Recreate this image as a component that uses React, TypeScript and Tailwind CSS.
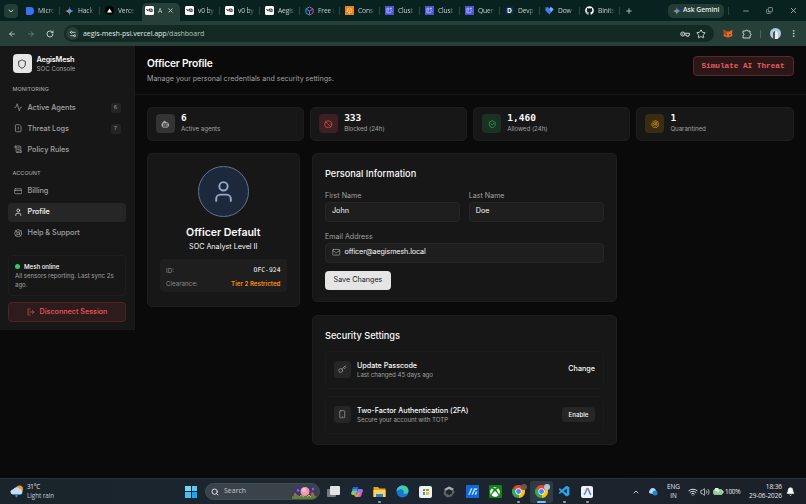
import React from "react";
import {
  Activity, ArrowLeft, ArrowRight, Ban, Bell, Bot, ChevronDown, ChevronUp, Copy, CreditCard, FileWarning, Key,
  LifeBuoy, LogOut, Mail, Minus, EllipsisVertical, Plus, Radar, RotateCw, ScrollText, Search, Settings2, Shield,
  ShieldCheck, Smartphone, Star, User, Volume2, Wifi, X,
} from "lucide-react";
import { FaGithub, FaXbox } from "react-icons/fa";
import { VscVscode } from "react-icons/vsc";

const Gemini = ({ className }: { className: string }) => (
  <svg viewBox="0 0 24 24" className={className}>
    <path d="M12 0C13 8 16 11 24 12L12 12Z" fill="#4b8df8" />
    <path d="M24 12C16 13 13 16 12 24L12 12Z" fill="#45b36b" />
    <path d="M12 24C11 16 8 13 0 12L12 12Z" fill="#f2c04b" />
    <path d="M0 12C8 11 11 8 12 0L12 12Z" fill="#ee6a5f" />
    <circle cx="12" cy="12" r="4.5" fill="#5a8ff0" />
  </svg>
);

const V0 = () => (
  <span className="flex h-[9px] w-[9px] items-center justify-center rounded-[1.5px] bg-white">
    <svg viewBox="0 0 20 12" className="w-[7px]" fill="none" stroke="#111" strokeWidth="2.2">
      <path d="M1 3L6 9V3M9 3h6a3 3 0 0 1 3 3v4h-5a3 3 0 0 1-3-3V3M11 10L18 3" />
    </svg>
  </span>
);

const Cluster = () => (
  <span className="flex h-[9px] w-[9px] items-center justify-center bg-[#4d55d8]">
    <svg viewBox="0 0 16 16" className="h-[7px] w-[7px]" fill="none" stroke="#d5d8ff" strokeWidth="1.5">
      <path d="M7 3H2v10h9v-3M4 6h4M4 9h3M11 1v5M8.500 3.500h5M11 7l3 3" />
    </svg>
  </span>
);

const tabs: { icon: React.ReactNode; label: string; active?: boolean; sep?: boolean }[] = [
  { icon: <span className="h-2 w-2 rounded-[1px] rounded-r-[4px] bg-[#3973f4]" />, label: "Micro", sep: true },
  { icon: <Gemini className="h-2.5 w-2.5" />, label: "Hack", sep: true },
  {
    icon: (
      <span className="flex h-[9px] w-[9px] items-center justify-center rounded-full bg-black">
        <svg viewBox="0 0 10 10" className="h-[5px] w-[5px]"><path d="M5 1L10 9H0Z" fill="#fff" /></svg>
      </span>
    ),
    label: "Verce",
  },
  { icon: <V0 />, label: "A", active: true },
  { icon: <V0 />, label: "v0 by", sep: true },
  { icon: <V0 />, label: "v0 by", sep: true },
  { icon: <V0 />, label: "Aegis", sep: true },
  {
    icon: (
      <svg viewBox="0 0 20 20" className="h-[10px] w-[10px]" fill="none" strokeWidth="2">
        <path d="M10 1L2 5.500v9L10 19" stroke="#2da9e8" />
        <path d="M10 1l8 4.500v9L10 19" stroke="#e0559a" />
        <path d="M3 6l7 4 7-4M10 10v8" stroke="#8b7cf0" />
      </svg>
    ),
    label: "Free (",
    sep: true,
  },
  {
    icon: (
      <span className="flex h-[9px] w-[9px] items-center justify-center bg-[#ed8116]">
        <svg viewBox="0 0 16 16" className="h-[7px] w-[7px]" fill="none" stroke="#ffe2bd" strokeWidth="1.4">
          <path d="M8 2l5 3v6l-5 3-5-3V5zM3 5l5 3 5-3M8 8v6" />
        </svg>
      </span>
    ),
    label: "Cons",
    sep: true,
  },
  { icon: <Cluster />, label: "Clust", sep: true },
  { icon: <Cluster />, label: "Clust", sep: true },
  { icon: <Cluster />, label: "Query", sep: true },
  {
    icon: <span className="flex h-[9px] w-[9px] items-center justify-center rounded-full bg-[#0a3049] text-[6.500px] font-bold text-white">D</span>,
    label: "Devp",
    sep: true,
  },
  {
    icon: (
      <svg viewBox="0 0 20 20" className="h-[9px] w-[9px]">
        <path d="M1 3h6l3 3 3-4 6 5-9 12L1 10Z" fill="#3f7df5" />
        <path d="M10 6l3-4 6 5-5 6Z" fill="#80b0ff" />
      </svg>
    ),
    label: "Dow",
    sep: true,
  },
  { icon: <FaGithub className="h-[9px] w-[9px] text-white" />, label: "Binits", sep: true },
];

function BrowserChrome() {
  return (
    <header className="font-['Open_Sans','Noto_Sans',sans-serif] text-[#c8d3cf]">
      <div className="flex h-[21px] items-center bg-[#08231f]">
        <div className="flex w-5 pl-1">
          <span className="flex h-[14px] w-[14px] items-center justify-center rounded-[4px] bg-[#233e37]">
            <ChevronDown className="h-2 w-2" strokeWidth={3} />
          </span>
        </div>
        {tabs.map((t, i) => (
          <div key={i} className="relative flex h-[21px] w-10 items-center pl-[5px]">
            {t.active && <span className="absolute top-[3px] right-0 bottom-0 left-[2px] rounded-t-[5px] bg-[#263f39]" />}
            <span className="relative flex w-[9px] shrink-0 justify-center">{t.icon}</span>
            <span className="relative ml-[4px] w-[21px] shrink-0 whitespace-nowrap text-[6.700px] leading-[10px] tracking-[-0.15px] [mask-image:linear-gradient(to_right,#000_50%,transparent_80%)]">{t.label}</span>
            {t.active && <X className="absolute top-[7px] left-[27px] h-[7px] w-[7px]" strokeWidth={3} />}
            {t.sep && <span className="absolute right-0 h-2 w-px bg-[#29453d]" />}
          </div>
        ))}
        <Plus className="ml-[5px] h-2 w-2" strokeWidth={2.5} />
        <div className="ml-[35px] flex h-[14px] w-[56px] items-center gap-[2px] rounded-[5px] bg-[#233c36] pl-[5px]">
          <Gemini className="h-2 w-2" />
          <span className="whitespace-nowrap text-[6.800px] font-semibold tracking-[-0.05px] text-[#e2ebe7]">Ask Gemini</span>
        </div>
        <span className="ml-[4px] h-2 w-px bg-[#29453d]" />
        <Minus className="ml-[13px] h-[8px] w-[8px]" />
        <Copy className="ml-[16px] h-[7px] w-[7px] -scale-x-100 rotate-180" />
        <X className="ml-[16px] h-[9px] w-[9px]" />
      </div>
      <div className="flex h-[25px] items-center bg-[#263f39]">
        <div className="flex w-[64px] shrink-0 items-center gap-[11px] pl-[8px]">
          <ArrowLeft className="h-2 w-2" strokeWidth={2.5} />
          <ArrowRight className="h-2 w-2 text-[#71847e]" strokeWidth={2.5} />
          <RotateCw className="h-2 w-2" strokeWidth={2.8} />
        </div>
        <div className="flex h-[17px] w-[650px] shrink-0 items-center rounded-full bg-[#132924] pr-[8px] pl-[2px]">
          <span className="flex h-[13px] w-[13px] shrink-0 items-center justify-center rounded-full bg-[#263f39]">
            <Settings2 className="h-2 w-2 rotate-180" strokeWidth={2.5} />
          </span>
          <span className="ml-[4px] flex-1 text-[7.080px] tracking-[-0.06px] whitespace-nowrap text-[#e2ebe7]">
            aegis-mesh-psi.vercel.app<span className="text-[#b3c1bb]">/dashboard</span>
          </span>
          <svg viewBox="0 0 20 12" className="h-[6px] w-[10px]" fill="none" stroke="currentColor" strokeWidth="2">
            <circle cx="5.500" cy="6" r="4" /><circle cx="5.500" cy="6" r="0.700" />
            <path d="M9.500 4.500H19V8H17.500V10.500H13.500V8H9.500" />
          </svg>
          <Star className="ml-[6px] h-[10px] w-[10px]" strokeWidth={2.3} />
        </div>
        <svg viewBox="0 0 20 18" className="ml-[9px] h-[9px] w-[10px] shrink-0">
          <path d="M1 1l6 4h6l6-4-1 8 1 5-5 2-4 1-4-1-5-2 1-5Z" fill="#e5672a" />
          <path d="M4 10l4 1v3ZM16 10l-4 1v3Z" fill="#3a2822" />
          <path d="M1 1l6 4 1 6-7-2Z" fill="#b9421b" />
        </svg>
        <svg viewBox="0 0 20 20" className="ml-[9px] h-[10px] w-[10px] shrink-0" fill="none" stroke="currentColor" strokeWidth="2">
          <path d="M2 4h5.500a2 2 0 0 1 4 0H16v5a2 2 0 0 1 0 4v5H2v-5a2 2 0 0 0 0-4Z" strokeLinejoin="round" />
        </svg>
        <span className="ml-[8px] h-2 w-px shrink-0 bg-[#49665d]" />
        <span className="ml-[9px] flex h-[11px] w-[11px] shrink-0 items-end justify-center overflow-hidden rounded-full bg-[#a9cce2]">
          <span className="h-[8px] w-[5px] rounded-t-full border-l-2 border-[#43535c] bg-[#f1ede8]" />
        </span>
        <EllipsisVertical className="ml-[8px] h-[9px] w-[9px] shrink-0" strokeWidth={2.5} />
      </div>
    </header>
  );
}

function NavItem({ icon: Icon, label, count, active }: { icon: React.ElementType; label: string; count?: string; active?: boolean }) {
  return (
    <div className={"flex h-[19px] items-center rounded-[4px] px-[5.500px] " + (active ? "bg-[#262626] text-[#fafafa]" : "text-[#a1a1a1]")}>
      <Icon className="h-[8.500px] w-[8.500px]" strokeWidth={2} />
      <span className="ml-[5.500px] flex-1 pt-px text-[7.300px] font-medium tracking-[-0.03px]">{label}</span>
      {count && (
        <span className="flex h-[10px] w-[10px] items-center justify-center rounded-[2px] bg-[#242424] font-['DejaVu_Sans_Mono',monospace] text-[5.500px]">{count}</span>
      )}
    </div>
  );
}

function Sidebar() {
  return (
    <aside className="h-[284px] w-[135px] shrink-0 border-r border-[#1b1b1b] bg-[#171717] pr-[8px] pl-[8px]">
      <div className="flex h-[35px] items-center pl-[4.500px]">
        <span className="flex h-[19px] w-[19px] items-center justify-center rounded-[4px] bg-[#e5e5e5] text-[#171717]">
          <Shield className="h-[10px] w-[10px]" />
        </span>
        <div className="ml-[5px] pt-px">
          <div className="text-[7.300px] leading-[9px] font-semibold tracking-[-0.18px] text-[#fafafa]">AegisMesh</div>
          <div className="text-[6.200px] leading-[9px] tracking-[-0.02px] text-[#a1a1a1]">SOC Console</div>
        </div>
      </div>
      <div className="mt-[4px] pl-[4.500px] text-[5.400px] leading-[8px] font-medium tracking-[0.12px] text-[#a1a1a1]">MONITORING</div>
      <nav className="mt-[5px] flex flex-col gap-[2px]">
        <NavItem icon={Activity} label="Active Agents" count="6" />
        <NavItem icon={FileWarning} label="Threat Logs" count="7" />
        <NavItem icon={ScrollText} label="Policy Rules" />
      </nav>
      <div className="mt-[10px] pl-[4.500px] text-[5.400px] leading-[8px] font-medium tracking-[0.12px] text-[#a1a1a1]">ACCOUNT</div>
      <nav className="mt-[4.500px] flex flex-col gap-[2px]">
        <NavItem icon={CreditCard} label="Billing" />
        <NavItem icon={User} label="Profile" active />
        <NavItem icon={LifeBuoy} label="Help & Support" />
      </nav>
      <div className="mt-[12.500px] h-[41px] rounded-[4px] border border-[#1e1e1e] px-[6px] pt-[6px]">
        <div className="flex items-center text-[6.200px] leading-[9px] font-medium tracking-[-0.06px] text-[#fafafa]">
          <span className="mr-[4px] h-[5px] w-[5px] rounded-full bg-[#32c967]" />
          Mesh online
        </div>
        <div className="mt-[1px] text-[6.100px] leading-[8.500px] tracking-[-0.02px] whitespace-nowrap text-[#a1a1a1]">All sensors reporting. Last sync 2s<br />ago.</div>
      </div>
      <button className="mt-[6px] flex h-[20px] w-full items-center justify-center gap-[5px] rounded-[4px] border border-[#4b2425] bg-[#2e1c1d] text-[7.200px] font-medium text-[#ef5558]">
        <LogOut className="h-[8px] w-[8px]" />
        Disconnect Session
      </button>
    </aside>
  );
}

const stats = [
  { icon: Bot, value: "6", label: "Active agents", tone: "bg-[#343434] text-[#e5e5e5]" },
  { icon: Ban, value: "333", label: "Blocked (24h)", tone: "bg-[#3c2022] text-[#e65358]" },
  { icon: ShieldCheck, value: "1,460", label: "Allowed (24h)", tone: "bg-[#1b3223] text-[#2fb961]" },
  { icon: Radar, value: "1", label: "Quarantined", tone: "bg-[#392c13] text-[#d39a0b]" },
];

function Field({ label, value, icon }: { label: string; value: string; icon?: boolean }) {
  return (
    <div className="flex-1">
      <div className="text-[7.100px] leading-[10px] text-[#a1a1a1]">{label}</div>
      <div className="mt-px flex h-[20px] items-center rounded-[4px] border border-[#262626] bg-[#1e1e1e] pl-[6px] text-[7.200px] text-[#fafafa]">
        {icon && <Mail className="mr-[4px] h-[8.500px] w-[8.500px] text-[#a1a1a1]" strokeWidth={2} />}
        <span className={icon ? "tracking-[-0.12px]" : ""}>{value}</span>
      </div>
    </div>
  );
}

function SecurityRow({ icon: Icon, title, note, action }: { icon: React.ElementType; title: string; note: string; action: React.ReactNode }) {
  return (
    <div className="flex h-[38px] items-center rounded-[5px] border border-[#1b1b1b] px-2">
      <span className="flex h-[17px] w-[17px] items-center justify-center rounded-[4px] bg-[#262626] text-[#a1a1a1]">
        <Icon className="h-[8.500px] w-[8.500px]" />
      </span>
      <div className="ml-[6px] flex-1">
        <div className="text-[7.200px] leading-[9px] font-medium tracking-[-0.02px] text-[#fafafa]">{title}</div>
        <div className="text-[6.200px] leading-[9px] tracking-[-0.06px] text-[#a1a1a1]">{note}</div>
      </div>
      {action}
    </div>
  );
}

function Main() {
  return (
    <main className="flex-1 text-[#fafafa]">
      <div className="flex h-[49px] items-start justify-between border-b border-[#171717] pr-[12.500px] pl-[12px]">
        <div className="pt-[10px]">
          <h1 className="text-[10.200px] leading-[14px] font-semibold tracking-[-0.21px]">Officer Profile</h1>
          <p className="mt-[3px] text-[7.100px] leading-[11px] tracking-[-0.02px] text-[#a1a1a1]">Manage your personal credentials and security settings.</p>
        </div>
        <button className="mt-[10px] h-[20px] w-[101px] rounded-[4px] border border-[#5a282b] bg-[#2b1718] pt-[2px] font-['Liberation_Mono',monospace] text-[7.700px] font-bold whitespace-nowrap text-[#e75d61]">Simulate AI Threat</button>
      </div>
      <div className="mt-[12px] grid grid-cols-4 gap-[6px] pr-[12.500px] pl-[12px]">
        {stats.map(({ icon: Icon, value, label, tone }) => (
          <div key={label} className="flex h-[33.500px] items-center rounded-[5px] border border-[#1d1d1d] bg-[#171717] pl-2">
            <span className={"flex h-[19px] w-[19px] items-center justify-center rounded-[4px] " + tone}>
              <Icon className="h-[8.500px] w-[8.500px]" />
            </span>
            <div className="ml-[6px]">
              <div className="-mt-[2px] font-['DejaVu_Sans_Mono',monospace] text-[9.500px] leading-[11px] font-bold">{value}</div>
              <div className="mt-px text-[6.200px] leading-[9px] tracking-[-0.04px] text-[#a1a1a1]">{label}</div>
            </div>
          </div>
        ))}
      </div>
      <div className="mt-[12px] flex items-start gap-[12px] pl-[12px]">
        <section className="flex h-[154.500px] w-[152.500px] flex-col items-center rounded-[5px] border border-[#1e1e1e] bg-[#171717] px-[12px] pt-[12px]">
          <span className="flex h-[51px] w-[51px] shrink-0 items-center justify-center rounded-full border border-[#64748b] bg-[#1c293d] text-[#94a9c8]">
            <User className="h-[25px] w-[25px]" strokeWidth={1.9} />
          </span>
          <h2 className="mt-[9px] text-[10.600px] leading-[14px] font-semibold tracking-[-0.06px]">Officer Default</h2>
          <p className="mt-[2.500px] text-[7.200px] leading-[10px]">SOC Analyst Level II</p>
          <div className="mt-[7px] h-[33px] w-full rounded-[4px] bg-[#1e1e1e] px-[6px] pt-[6px] text-[6.200px] leading-[11px] text-[#8d8d8d]">
            <div className="flex justify-between">
              <span>ID:</span>
              <span className="font-['DejaVu_Sans_Mono',monospace] text-[6.400px] text-[#fafafa]">OFC-924</span>
            </div>
            <div className="mt-[1.500px] flex justify-between">
              <span>Clearance:</span>
              <span className="font-semibold text-[#fe8c0b]">Tier 2 Restricted</span>
            </div>
          </div>
        </section>
        <div className="flex w-[305.500px] flex-col gap-[12.500px]">
          <section className="h-[149.500px] rounded-[5px] border border-[#1e1e1e] bg-[#171717] pt-[13px] pr-[12px] pl-[12.500px]">
            <h2 className="text-[9.200px] leading-[14px] font-medium">Personal Information</h2>
            <div className="mt-[10px] flex gap-[8.500px]">
              <Field label="First Name" value="John" />
              <Field label="Last Name" value="Doe" />
            </div>
            <div className="mt-[10px]"><Field label="Email Address" value="officer@aegismesh.local" icon /></div>
            <button className="mt-[8px] h-[19px] w-[66px] rounded-[4px] bg-[#e5e5e5] pt-px text-[7.200px] whitespace-nowrap text-[#171717]">Save Changes</button>
          </section>
          <section className="h-[130.500px] rounded-[5px] border border-[#1e1e1e] bg-[#171717] pt-[13px] pr-[12px] pl-[12.500px]">
            <h2 className="text-[9.200px] leading-[14px] font-medium">Security Settings</h2>
            <div className="mt-[8px] flex flex-col gap-[7px]">
              <SecurityRow icon={Key} title="Update Passcode" note="Last changed 45 days ago" action={<span className="text-[7.200px] font-medium">Change</span>} />
              <SecurityRow icon={Smartphone} title="Two-Factor Authentication (2FA)" note="Secure your account with TOTP" action={<span className="flex h-[15px] w-[33px] items-center justify-center rounded-[4px] bg-[#262626] text-[6.200px] font-medium">Enable</span>} />
            </div>
          </section>
        </div>
      </div>
    </main>
  );
}

const Chrome = ({ badge }: { badge: string }) => (
  <span className="relative">
    <svg viewBox="0 0 24 24" className="h-[13px] w-[13px]">
      <path d="M12 12L1.600 6A12 12 0 0 1 22.400 6Z" fill="#e94335" />
      <path d="M12 12L22.400 6A12 12 0 0 1 12 24Z" fill="#fbc116" />
      <path d="M12 12L12 24A12 12 0 0 1 1.600 6Z" fill="#34a853" />
      <circle cx="12" cy="12" r="5.800" fill="#fff" />
      <circle cx="12" cy="12" r="4.500" fill="#4285f4" />
    </svg>
    <span className={"absolute -top-[1px] -right-[2px] h-[6px] w-[6px] rounded-full " + badge} />
  </span>
);

const apps: { icon: React.ReactNode; mark?: string }[] = [
  { icon: <span className="relative h-[12px] w-[13px]"><span className="absolute bottom-[1px] left-0 h-[8px] w-[9px] rounded-[1px] bg-[#777b80]" /><span className="absolute top-0 right-0 h-[9px] w-[10px] rounded-[1px] bg-[#e2e3e4]" /></span> },
  {
    icon: (
      <svg viewBox="0 0 24 24" className="h-[12px] w-[12px]">
        <path d="M7 2h7l-4 16H4c-3 0-4-2-3-5l2-7c1-3 2-4 4-4Z" fill="#29a3ec" />
        <path d="M7 2h7l-1 4H3c1-3 2-4 4-4Z" fill="#2c62d8" />
        <path d="M3 10l9 0-2 8H4c-3 0-4-2-3-5Z" fill="#8fc94f" />
        <path d="M17 22h-7l4-16h6c3 0 4 2 3 5l-2 7c-1 3-2 4-4 4Z" fill="#d858cf" />
        <path d="M14 6h6c3 0 4 2 3 5l-1 3h-10Z" fill="#9372f2" />
        <path d="M10 22c-2 0-3-2-4-5h7l1-4h4l-4 9Z" fill="#f39350" />
      </svg>
    ),
  },
  {
    icon: (
      <svg viewBox="0 0 26 24" className="h-[12px] w-[13px]">
        <path d="M1 2h9l3 3h12v17H1Z" fill="#e9a51d" /><path d="M1 8h24v14H1Z" fill="#ffd35a" /><path d="M6 16h14v6H6Z" fill="#2382d8" />
      </svg>
    ),
    mark: "w-[3px] bg-[#9a9fa6]",
  },
  {
    icon: (
      <svg viewBox="0 0 24 24" className="h-[13px] w-[13px]">
        <circle cx="12" cy="12" r="11" fill="#1478cf" />
        <path d="M1 12C2 3 9 1 13 1c7 0 11 6 10 11-1 4-5 5-9 4 2-4-1-8-6-8-4 0-6 2-7 4Z" fill="#42cba4" />
        <path d="M1 12C2 6 6 1 13 1c-4 1-6 3-5 7-4 0-6 2-7 4Z" fill="#35bff0" />
      </svg>
    ),
  },
  {
    icon: (
      <span className="flex h-[12px] w-[13px] items-center justify-center rounded-[2px] bg-[#eef1f3]">
        <span className="grid grid-cols-2 gap-[1px]"><i className="h-[2.500px] w-[2.500px] bg-[#ef5330]" /><i className="h-[2.500px] w-[2.500px] bg-[#79b51c]" /><i className="h-[2.500px] w-[2.500px] bg-[#20a0e8]" /><i className="h-[2.500px] w-[2.500px] bg-[#f9b71b]" /></span>
      </span>
    ),
  },
  {
    icon: (
      <svg viewBox="0 0 24 24" className="h-[12px] w-[12px]">
        <path d="M12 1l9 4 2 8-6 8-9 2-7-7 2-10Z" fill="#5b6268" /><path d="M12 6l6 3v6l-6 3-6-3V9Z" fill="#20262b" /><path d="M12 1l9 4-3 4-6-3-6 3-3-3Z" fill="#a8adb1" />
      </svg>
    ),
  },
  { icon: <svg viewBox="0 0 24 24" className="h-[13px] w-[13px]"><path d="M0 0h24v24H0Z" fill="#1268da" /><path d="M4 18L9 6h3L7 18ZM10 18l5-12h6l-1 3h-3l-4 9ZM16 18l2-6h3l-2 6Z" fill="#a6e2ff" /></svg> },
  { icon: <span className="flex h-[13px] w-[13px] items-center justify-center rounded-[1px] bg-[#128315]"><FaXbox className="h-[10px] w-[10px] text-white" /></span> },
  { icon: <Chrome badge="bg-[#765641]" />, mark: "w-[3px] bg-[#9a9fa6]" },
  { icon: <Chrome badge="bg-[#a9cce2]" />, mark: "w-[9px] bg-[#62c7f3]" },
  { icon: <VscVscode className="h-[13px] w-[13px] text-[#2aa4ed]" />, mark: "w-[3px] bg-[#9a9fa6]" },
  {
    icon: (
      <span className="flex h-[12px] w-[12px] items-center justify-center rounded-[2px] bg-[#f0f2f5]">
        <svg viewBox="0 0 20 20" className="h-[9px] w-[9px]" fill="none" strokeWidth="3"><path d="M2 17C7 14 7 3 10 3" stroke="#4683e7" /><path d="M10 3c3 0 3 11 8 14" stroke="#3575ec" /><path d="M7.500 6C8.500 3 11.500 3 12.500 6" stroke="#e26b48" /></svg>
      </span>
    ),
    mark: "w-[3px] bg-[#9a9fa6]",
  },
];

function Taskbar() {
  return (
    <footer className="flex h-[26px] items-center border-t border-[#2b3238] bg-linear-to-r from-[#1a242b] via-[#1c2630] to-[#1b2028] font-['Open_Sans','Noto_Sans',sans-serif] text-[#e7eaec]">
      <svg viewBox="0 0 28 26" className="ml-[10px] h-[13px] w-[14px]">
        <circle cx="19" cy="8" r="7" fill="#f4992b" />
        <path d="M6 19a5 5 0 0 1 0-10 8 8 0 0 1 14-1 6 6 0 0 1 2 11Z" fill="#c4dcf6" />
        <path d="M11 18l5 0-2 7c-3 0-4-3-3-7Z" fill="#3488ec" />
      </svg>
      <div className="ml-[3px] w-[159px] text-[6.300px] leading-[8.500px] tracking-[-0.04px]">
        <div className="tracking-[-0.25px]">31°C</div>
        <div className="text-[#c4c9cd]">Light rain</div>
      </div>
      <div className="ml-[-1px] grid h-[12px] w-[12px] grid-cols-2 gap-[1px]">
        <i className="bg-[#71d6fa]" /><i className="bg-[#57c8f8]" /><i className="bg-[#47bdf5]" /><i className="bg-[#20a5ef]" />
      </div>
      <div className="ml-[8px] flex h-[17px] w-[115px] items-center overflow-hidden rounded-full border border-[#434b53] bg-[#3a424a] pl-[5px]">
        <Search className="h-2 w-2" strokeWidth={2.8} />
        <span className="ml-[5px] flex-1 text-[7px] text-[#c5cacd]">Search</span>
        <svg viewBox="0 0 50 28" className="mr-[2px] h-[14px] w-[25px]">
          <path d="M0 28L5 7 14 2l9 7L36 2l9 6 5 20Z" fill="#303b76" />
          <path d="M0 23l8-5 8 5 8-3 9 3 9-5 8 6v4H0Z" fill="#618337" />
          <circle cx="26" cy="13" r="9" fill="#f09aab" /><circle cx="24" cy="10" r="4" fill="#f9c6c8" />
          <path d="M3 19l3-4 4 4-3 4ZM37 18l3-5 5 5-4 4Z" fill="#d5523f" /><path d="M9 11l3-4 3 4-3 3ZM39 8l3-3 3 4-3 2Z" fill="#a762bd" />
          <path d="M15 23l4-3 4 4M31 24l3-4 4 4" stroke="#f0b142" strokeWidth="2" fill="none" />
        </svg>
      </div>
      <div className="ml-[2px] flex">
        {apps.map((a, i) => (
          <div key={i} className={"relative flex h-[22px] w-[23.080px] items-center justify-center rounded-[3px] " + (i === 9 ? "bg-[#303a43]" : "")}>
            {a.icon}
            {a.mark && <span className={"absolute bottom-0 h-[1.500px] rounded-full " + a.mark} />}
          </div>
        ))}
      </div>
      <ChevronUp className="ml-[33px] h-2 w-2" strokeWidth={2.5} />
      <svg viewBox="0 0 20 16" className="ml-[8px] h-[9px] w-[10px]">
        <path d="M4 12a4 4 0 0 1 0-7 6 6 0 0 1 11-1l2 5-6 4Z" fill="#b9d9ee" /><circle cx="14" cy="11" r="5" fill="#1688df" />
      </svg>
      <div className="ml-[7px] w-[17px] text-center text-[6.400px] leading-[8.500px]">ENG<br />IN</div>
      <Wifi className="ml-[6px] h-[10px] w-[10px]" strokeWidth={2.3} />
      <Volume2 className="ml-[2px] h-[10px] w-[10px]" strokeWidth={1.8} />
      <svg viewBox="0 0 22 14" className="ml-[3px] h-[7px] w-[11px]">
        <rect x="1" y="3" width="18" height="10" rx="3" fill="#8ed08c" stroke="#e2f0e1" /><path d="M20 6v4" stroke="#e2f0e1" strokeWidth="2" /><path d="M4 0h7v5h3l-5 5V6H4Z" fill="#ddf0dc" />
      </svg>
      <span className="ml-[1px] w-[17px] text-[6.400px] tracking-[-0.2px]">100%</span>
      <div className="ml-[1px] w-[39px] text-right text-[6.500px] leading-[8.500px] tracking-[-0.1px] whitespace-nowrap">18:36<br />29-06-2026</div>
      <span className="relative ml-[4px]">
        <Bell className="h-[9px] w-[9px] fill-white" strokeWidth={2} />
        <span className="absolute top-0 right-0 text-[4px] leading-[4px] font-bold text-[#1b2028]">z</span>
      </span>
    </footer>
  );
}

export default function App() {
  return (
    <div className="flex h-[504px] w-[806px] flex-col overflow-hidden bg-[#0a0a0a] font-['Inter','Liberation_Sans',sans-serif] antialiased">
      <BrowserChrome />
      <div className="flex h-[432px] items-start bg-[#0a0a0a]">
        <Sidebar />
        <Main />
      </div>
      <Taskbar />
    </div>
  );
}
